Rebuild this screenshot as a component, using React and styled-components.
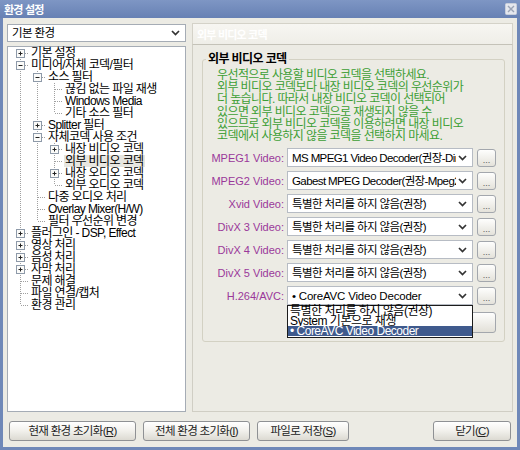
import React from "react";
import styled, { createGlobalStyle } from "styled-components";

const GlobalStyle = createGlobalStyle`
  html, body { margin: 0; padding: 0; background: #fff; }
  body {
    font-family: "Liberation Sans", "Noto Sans CJK KR", sans-serif;
    font-size: 11px;
    color: #000;
  }
  * { box-sizing: border-box; }
`;

const TREE = [
  { t: "기본 설정", l: 0, exp: "+" },
  { t: "미디어/자체 코덱/필터", l: 0, exp: "-" },
  { t: "소스 필터", l: 1, exp: "-" },
  { t: "끊김 없는 파일 재생", l: 2 },
  { t: "Windows Media", l: 2 },
  { t: "기타 소스 필터", l: 2 },
  { t: "Splitter 필터", l: 1, exp: "+" },
  { t: "자체코덱 사용 조건", l: 1, exp: "-" },
  { t: "내장 비디오 코덱", l: 2, exp: "+" },
  { t: "외부 비디오 코덱", l: 2, sel: true },
  { t: "내장 오디오 코덱", l: 2, exp: "+" },
  { t: "외부 오디오 코덱", l: 2 },
  { t: "다중 오디오 처리", l: 1 },
  { t: "Overlay Mixer(H/W)", l: 1 },
  { t: "필터 우선순위 변경", l: 1 },
  { t: "플러그인 - DSP, Effect", l: 0, exp: "+" },
  { t: "영상 처리", l: 0, exp: "+" },
  { t: "음성 처리", l: 0, exp: "+" },
  { t: "자막 처리", l: 0, exp: "+" },
  { t: "문제 해결", l: 0 },
  { t: "파일 연결/캡처", l: 0 },
  { t: "환경 관리", l: 0 },
];

const CODECS = [
  { label: "MPEG1 Video:", value: "MS MPEG1 Video Decoder(권장-Dinput)" },
  { label: "MPEG2 Video:", value: "Gabest MPEG Decoder(권장-Mpeg2)" },
  { label: "Xvid Video:", value: "특별한 처리를 하지 않음(권장)" },
  { label: "DivX 3 Video:", value: "특별한 처리를 하지 않음(권장)" },
  { label: "DivX 4 Video:", value: "특별한 처리를 하지 않음(권장)" },
  { label: "DivX 5 Video:", value: "특별한 처리를 하지 않음(권장)" },
];

const NOTE = [
  "우선적으로 사용할 비디오 코덱을 선택하세요.",
  "외부 비디오 코덱보다 내장 비디오 코덱의 우선순위가",
  "더 높습니다. 따라서 내장 비디오 코덱이 선택되어",
  "있으면 외부 비디오 코덱으로 재생되지 않을 수",
  "있으므로 외부 비디오 코덱을 이용하려면 내장 비디오",
  "코덱에서 사용하지 않을 코덱을 선택하지 마세요.",
];

const V = "repeating-linear-gradient(to bottom, #a0a0a0 0 1px, transparent 1px 2px)";
const H = "repeating-linear-gradient(to right, #a0a0a0 0 1px, transparent 1px 2px)";

const Window = styled.div`
  width: 520px;
  height: 450px;
  display: flex;
  flex-direction: column;
  background: #6f88b8;
`;

const TitleBar = styled.div`
  height: 18px;
  display: flex;
  align-items: center;
  justify-content: space-between;
  padding: 0 3px 0 4px;
  background: linear-gradient(#7e96c4, #6781b4);
  color: #fff;
  font-weight: bold;
  letter-spacing: -0.8px;
`;

const Body = styled.div`
  flex: 1;
  margin: 0 3px 3px 3px;
  background: #ecebe4;
  display: flex;
  flex-direction: column;
  padding: 5px 4px 6px 4px;
`;

const Main = styled.div`
  height: 389px;
  display: flex;
  gap: 6px;
`;

const LeftCol = styled.div`
  width: 179px;
  display: flex;
  flex-direction: column;
  gap: 4px;
`;

const RightCol = styled.div`
  flex: 1;
  display: flex;
  flex-direction: column;
`;

const Combo = styled.div`
  height: ${(p) => p.$h || 19}px;
  width: ${(p) => (p.$w ? `${p.$w}px` : "auto")};
  margin-top: ${(p) => p.$mt || 0}px;
  background: #fff;
  border: 1px solid ${(p) => p.$border || "#b7bcc4"};
  display: flex;
  align-items: center;
  padding: 0 5px 0 4px;
  gap: 2px;
  position: relative;
`;

const ComboText = styled.span`
  flex: 1;
  overflow: hidden;
  white-space: nowrap;
  letter-spacing: ${(p) => p.$ls ?? -0.6}px;
  font-size: 11.5px;
  line-height: 14px;
`;

const Tree = styled.div`
  flex: 1;
  background: #fff;
  border: 1px solid #a5acb5;
  padding: 0 0 0 4px;
`;

const TreeRow = styled.div`
  display: flex;
  height: 12px;
  align-items: center;
`;

const Guide = styled.span`
  width: 17px;
  height: 12px;
  flex: none;
  background: ${(p) => (p.$on ? `${V} 8px 0 / 1px 12px no-repeat` : "none")};
`;

const Connector = styled.span`
  width: 17px;
  height: 12px;
  flex: none;
  display: flex;
  align-items: center;
  padding-left: 4px;
  background: ${(p) =>
    [
      p.$top ? `${V} 8px 0 / 1px 6px no-repeat` : null,
      p.$bottom ? `${V} 8px 6px / 1px 6px no-repeat` : null,
      `${H} 9px 6px / 8px 1px no-repeat`,
    ]
      .filter(Boolean)
      .join(", ")};
`;

const TreeText = styled.span`
  display: inline-block;
  height: 12px;
  margin-left: 1px;
  padding: 0 1px;
  line-height: 12px;
  font-size: 12px;
  letter-spacing: -0.6px;
  white-space: nowrap;
  background: ${(p) => (p.$sel ? "#e7e6e0" : "transparent")};
`;

const PanelHeader = styled.div`
  height: 22px;
  background: linear-gradient(#f7f6f2, #efeee8);
  border: 1px solid #d4d2c8;
  border-bottom-color: #c4c2b8;
  color: #fff;
  font-weight: bold;
  display: flex;
  align-items: center;
  padding-left: 4px;
  letter-spacing: -0.8px;
`;

const Panel = styled.div`
  flex: 1;
  border: 1px solid #d0cec4;
  border-top: none;
  padding: 0 7px 0 9px;
`;

const Group = styled.fieldset`
  margin: 8px 0 0 0;
  padding: 0 0 8px 0;
  border: 1px solid #d3d1c3;
  border-radius: 3px;
`;

const Legend = styled.legend`
  margin-left: 3px;
  padding: 0 2px;
  font-weight: bold;
  font-size: 12px;
  line-height: 12px;
  letter-spacing: -0.6px;
`;

const Note = styled.div`
  margin: 4px 0 0 14px;
  color: #3c9e34;
  font-size: 12px;
  line-height: 12.2px;
  letter-spacing: -0.6px;
  white-space: nowrap;
`;

const CodecList = styled.div`
  margin-top: 6px;
  display: flex;
  flex-direction: column;
  gap: 4px;
`;

const CodecRow = styled.div`
  display: flex;
  align-items: center;
  height: 19px;
`;

const Label = styled.span`
  width: 81px;
  text-align: right;
  color: #9a389a;
  white-space: nowrap;
  margin-right: 3px;
`;

const DotsButton = styled.button`
  margin-left: 4px;
  width: 19px;
  height: 18px;
  padding: 0 0 3px 0;
  border: 1px solid #a3a7ad;
  border-radius: 3px;
  background: linear-gradient(#fefefd, #e4e2da);
  color: #5a5a5a;
  font: 9px "Liberation Sans", sans-serif;
  display: flex;
  align-items: flex-end;
  justify-content: center;
  line-height: 6px;
`;

const HiddenButtonRow = styled.div`
  margin: 7px 0 0 84px;
  width: 209px;
  height: 21px;
  border: 1px solid #a3a7ad;
  border-radius: 3px;
  background: linear-gradient(#fefefd, #e2e0d8);
`;

const DropList = styled.div`
  position: absolute;
  left: -1px;
  top: 18px;
  width: 186px;
  background: #fff;
  border: 1px solid #1c1c1c;
  z-index: 5;
  padding-bottom: 1px;
`;

const DropItem = styled.div`
  height: 10px;
  line-height: 10px;
  padding-left: 2px;
  font-size: 12px;
  letter-spacing: -0.5px;
  white-space: nowrap;
  background: ${(p) => (p.$sel ? "#3f5a8d" : "transparent")};
  color: ${(p) => (p.$sel ? "#fff" : "#000")};
`;

const Footer = styled.div`
  margin-top: 9px;
  height: 20px;
  display: flex;
  gap: 7px;
  padding-left: 2px;
`;

const FootButton = styled.button`
  width: ${(p) => p.$w}px;
  height: 20px;
  margin-left: ${(p) => p.$ml || 0}px;
  border: 1px solid #8f9194;
  border-radius: 3px;
  background: linear-gradient(#ffffff, #f3f2ee 45%, #dcdad2);
  font-family: "Liberation Sans", "Noto Sans CJK KR", sans-serif;
  font-size: 11.5px;
  letter-spacing: -0.7px;
  color: #222;
  padding: 0;
  line-height: 14px;
  u { text-decoration: underline; }
`;

const Chevron = () => (
  <svg width="9" height="6" viewBox="0 0 9 6" style={{ flex: "none" }}>
    <path d="M1 1 L4.5 4.5 L8 1" fill="none" stroke="#333" strokeWidth="1.7" />
  </svg>
);

const Expander = ({ open }) => (
  <svg width="9" height="9" viewBox="0 0 9 9">
    <rect x="0.5" y="0.5" width="8" height="8" fill="#fbfbf9" stroke="#8e9aa9" />
    <path d="M2.5 4.5 H6.5" stroke="#222" />
    {!open && <path d="M4.5 2.5 V6.5" stroke="#222" />}
  </svg>
);

const CloseIcon = () => (
  <svg width="12" height="12" viewBox="0 0 12 12">
    <rect x="0.5" y="0.5" width="11" height="11" rx="1" fill="#e4e7ee" stroke="#c8cedb" />
    <path d="M3 3 L9 9 M9 3 L3 9" stroke="#9aa3b5" strokeWidth="1.4" />
  </svg>
);

const hasNext = (level, from) => {
  for (let j = from + 1; j < TREE.length; j++) {
    if (TREE[j].l < level) return false;
    if (TREE[j].l === level) return true;
  }
  return false;
};

const treeRows = TREE.map((r, i) => {
  const guides = [];
  for (let d = 0; d < r.l; d++) {
    let a = i - 1;
    while (a >= 0 && TREE[a].l !== d) a--;
    guides.push(hasNext(d, a));
  }
  return { ...r, guides, next: hasNext(r.l, i), first: i === 0 };
});

const Mn = ({ k }) => <u>{k}</u>;

export default function App() {
  return (
    <>
      <GlobalStyle />
      <Window>
        <TitleBar>
          <span>환경 설정</span>
          <CloseIcon />
        </TitleBar>
        <Body>
          <Main>
            <LeftCol>
              <Combo $h={18} $mt={1} $border="#a5acb5">
                <ComboText $ls={-0.6}>기본 환경</ComboText>
                <Chevron />
              </Combo>
              <Tree>
                {treeRows.map((r, i) => (
                  <TreeRow key={i}>
                    {r.guides.map((on, d) => (
                      <Guide key={d} $on={on} />
                    ))}
                    <Connector $top={!r.first} $bottom={r.next}>
                      {r.exp && <Expander open={r.exp === "-"} />}
                    </Connector>
                    <TreeText $sel={r.sel}>{r.t}</TreeText>
                  </TreeRow>
                ))}
              </Tree>
            </LeftCol>
            <RightCol>
              <PanelHeader>외부 비디오 코덱</PanelHeader>
              <Panel>
                <Group>
                  <Legend>외부 비디오 코덱</Legend>
                  <Note>
                    {NOTE.map((line, i) => (
                      <div key={i}>{line}</div>
                    ))}
                  </Note>
                  <CodecList>
                    {CODECS.map((c) => (
                      <CodecRow key={c.label}>
                        <Label>{c.label}</Label>
                        <Combo $w={186}>
                          <ComboText>{c.value}</ComboText>
                          <Chevron />
                        </Combo>
                        <DotsButton>...</DotsButton>
                      </CodecRow>
                    ))}
                    <CodecRow>
                      <Label>H.264/AVC:</Label>
                      <Combo $w={186}>
                        <ComboText $ls={-0.2}>• CoreAVC Video Decoder</ComboText>
                        <Chevron />
                        <DropList>
                          <DropItem>특별한 처리를 하지 않음(권장)</DropItem>
                          <DropItem>System 기본으로 재생</DropItem>
                          <DropItem $sel>• CoreAVC Video Decoder</DropItem>
                        </DropList>
                      </Combo>
                      <DotsButton>...</DotsButton>
                    </CodecRow>
                  </CodecList>
                  <HiddenButtonRow />
                </Group>
              </Panel>
            </RightCol>
          </Main>
          <Footer>
            <FootButton $w={127}>
              현재 환경 초기화(<Mn k="R" />)
            </FootButton>
            <FootButton $w={107}>
              전체 환경 초기화(<Mn k="I" />)
            </FootButton>
            <FootButton $w={92}>
              파일로 저장(<Mn k="S" />)
            </FootButton>
            <FootButton $w={78} $ml={77}>
              닫기(<Mn k="C" />)
            </FootButton>
          </Footer>
        </Body>
      </Window>
    </>
  );
}
